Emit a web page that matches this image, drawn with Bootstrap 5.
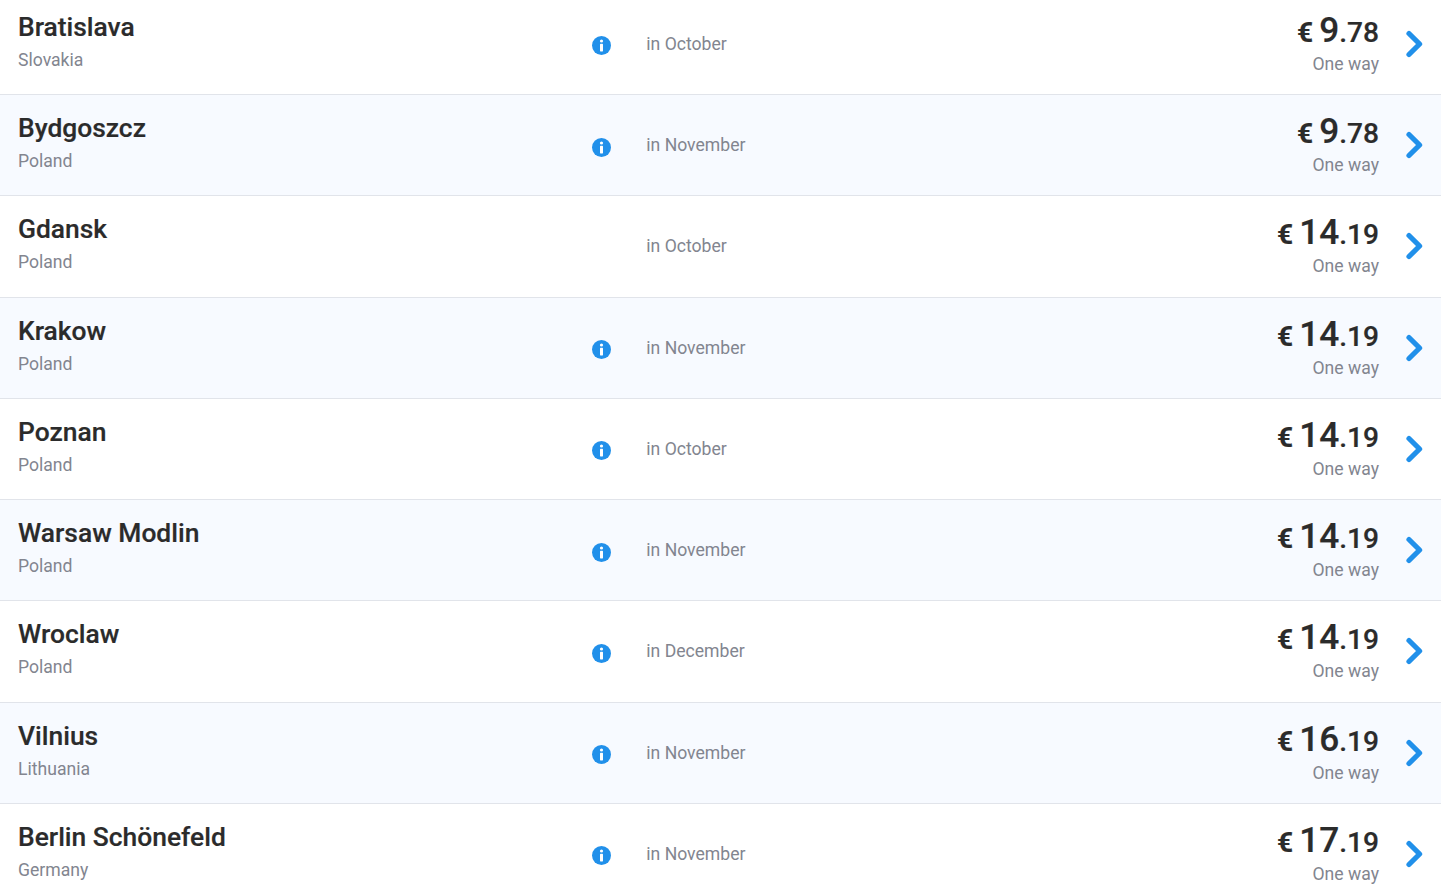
<!DOCTYPE html>
<html lang="en"><head><meta charset="utf-8"><title>Flights</title>
<link href="https://cdn.jsdelivr.net/npm/bootstrap@5.3.0/dist/css/bootstrap.min.css" rel="stylesheet">
<style>
html,body{height:894px;overflow:hidden;background:#fff}
body{font-family:Roboto,"Liberation Sans",sans-serif}
.fare-list{margin-top:-6.25px}
.fare-row{height:101.25px;border-bottom:1px solid #e1e4ea;padding:0 18px}
.fare-row:nth-child(even){background:#f7faff}
.dest-col{width:560px;padding-top:15.1px}
.dest-name{font-size:26.4px;font-weight:500;line-height:36px;color:#2b2b2b;-webkit-text-stroke:.2px #2b2b2b}
.dest-country{font-size:17.6px;line-height:26px;margin-top:2px;color:#82858f}
.info-col{width:46px;padding-top:42.5px;padding-left:14px}
.info-col svg{display:block;width:19px;height:19px}
.month-col{padding-left:22.3px;padding-top:37.1px;font-size:17.6px;line-height:26px;color:#82858f}
.price-col{padding-top:17.1px;text-align:right}
.price-line{line-height:38px;color:#2b2b2b;font-weight:500;white-space:nowrap;-webkit-text-stroke:.2px #2b2b2b}
.cur{font-size:28.16px;font-weight:700;margin-right:2px}
.big{font-size:35.2px}
.cents{font-size:28.16px}
.way{font-size:17.6px;line-height:26px;margin-top:-5px;color:#82858f}
.arrow-col{width:44px;padding-top:36.1px;padding-left:26px}
.arrow-col svg{display:block;width:18px;height:28px}
</style></head><body>
<svg width="0" height="0" class="d-block position-absolute"><defs>
<symbol id="ic-info" viewBox="0 0 19 19"><circle cx="9.5" cy="9.5" r="9.5" fill="#2190ea"/><circle cx="9.5" cy="5" r="1.6" fill="#fff"/><rect x="8" y="7.8" width="3" height="7.6" rx="0.6" fill="#fff"/></symbol>
<symbol id="ic-chev" viewBox="0 0 18 28"><path d="M4 3.5 14.6 14 4 24.5" fill="none" stroke="#2190ea" stroke-width="5.2" stroke-linecap="round" stroke-linejoin="round"/></symbol>
</defs></svg>
<div class="fare-list">
<div class="fare-row d-flex"><div class="dest-col"><div class="dest-name">Bratislava</div><div class="dest-country">Slovakia</div></div><div class="info-col"><svg><use href="#ic-info"/></svg></div><div class="month-col flex-grow-1">in October</div><div class="price-col"><div class="price-line"><span class="cur">€</span> <span class="big">9</span><span class="cents">.78</span></div><div class="way">One way</div></div><div class="arrow-col"><svg><use href="#ic-chev"/></svg></div></div>
<div class="fare-row d-flex"><div class="dest-col"><div class="dest-name">Bydgoszcz</div><div class="dest-country">Poland</div></div><div class="info-col"><svg><use href="#ic-info"/></svg></div><div class="month-col flex-grow-1">in November</div><div class="price-col"><div class="price-line"><span class="cur">€</span> <span class="big">9</span><span class="cents">.78</span></div><div class="way">One way</div></div><div class="arrow-col"><svg><use href="#ic-chev"/></svg></div></div>
<div class="fare-row d-flex"><div class="dest-col"><div class="dest-name">Gdansk</div><div class="dest-country">Poland</div></div><div class="info-col"></div><div class="month-col flex-grow-1">in October</div><div class="price-col"><div class="price-line"><span class="cur">€</span> <span class="big">14</span><span class="cents">.19</span></div><div class="way">One way</div></div><div class="arrow-col"><svg><use href="#ic-chev"/></svg></div></div>
<div class="fare-row d-flex"><div class="dest-col"><div class="dest-name">Krakow</div><div class="dest-country">Poland</div></div><div class="info-col"><svg><use href="#ic-info"/></svg></div><div class="month-col flex-grow-1">in November</div><div class="price-col"><div class="price-line"><span class="cur">€</span> <span class="big">14</span><span class="cents">.19</span></div><div class="way">One way</div></div><div class="arrow-col"><svg><use href="#ic-chev"/></svg></div></div>
<div class="fare-row d-flex"><div class="dest-col"><div class="dest-name">Poznan</div><div class="dest-country">Poland</div></div><div class="info-col"><svg><use href="#ic-info"/></svg></div><div class="month-col flex-grow-1">in October</div><div class="price-col"><div class="price-line"><span class="cur">€</span> <span class="big">14</span><span class="cents">.19</span></div><div class="way">One way</div></div><div class="arrow-col"><svg><use href="#ic-chev"/></svg></div></div>
<div class="fare-row d-flex"><div class="dest-col"><div class="dest-name">Warsaw Modlin</div><div class="dest-country">Poland</div></div><div class="info-col"><svg><use href="#ic-info"/></svg></div><div class="month-col flex-grow-1">in November</div><div class="price-col"><div class="price-line"><span class="cur">€</span> <span class="big">14</span><span class="cents">.19</span></div><div class="way">One way</div></div><div class="arrow-col"><svg><use href="#ic-chev"/></svg></div></div>
<div class="fare-row d-flex"><div class="dest-col"><div class="dest-name">Wroclaw</div><div class="dest-country">Poland</div></div><div class="info-col"><svg><use href="#ic-info"/></svg></div><div class="month-col flex-grow-1">in December</div><div class="price-col"><div class="price-line"><span class="cur">€</span> <span class="big">14</span><span class="cents">.19</span></div><div class="way">One way</div></div><div class="arrow-col"><svg><use href="#ic-chev"/></svg></div></div>
<div class="fare-row d-flex"><div class="dest-col"><div class="dest-name">Vilnius</div><div class="dest-country">Lithuania</div></div><div class="info-col"><svg><use href="#ic-info"/></svg></div><div class="month-col flex-grow-1">in November</div><div class="price-col"><div class="price-line"><span class="cur">€</span> <span class="big">16</span><span class="cents">.19</span></div><div class="way">One way</div></div><div class="arrow-col"><svg><use href="#ic-chev"/></svg></div></div>
<div class="fare-row d-flex"><div class="dest-col"><div class="dest-name">Berlin Schönefeld</div><div class="dest-country">Germany</div></div><div class="info-col"><svg><use href="#ic-info"/></svg></div><div class="month-col flex-grow-1">in November</div><div class="price-col"><div class="price-line"><span class="cur">€</span> <span class="big">17</span><span class="cents">.19</span></div><div class="way">One way</div></div><div class="arrow-col"><svg><use href="#ic-chev"/></svg></div></div>
</div>
<script src="https://cdn.jsdelivr.net/npm/bootstrap@5.3.0/dist/js/bootstrap.bundle.min.js"></script>
</body></html>
